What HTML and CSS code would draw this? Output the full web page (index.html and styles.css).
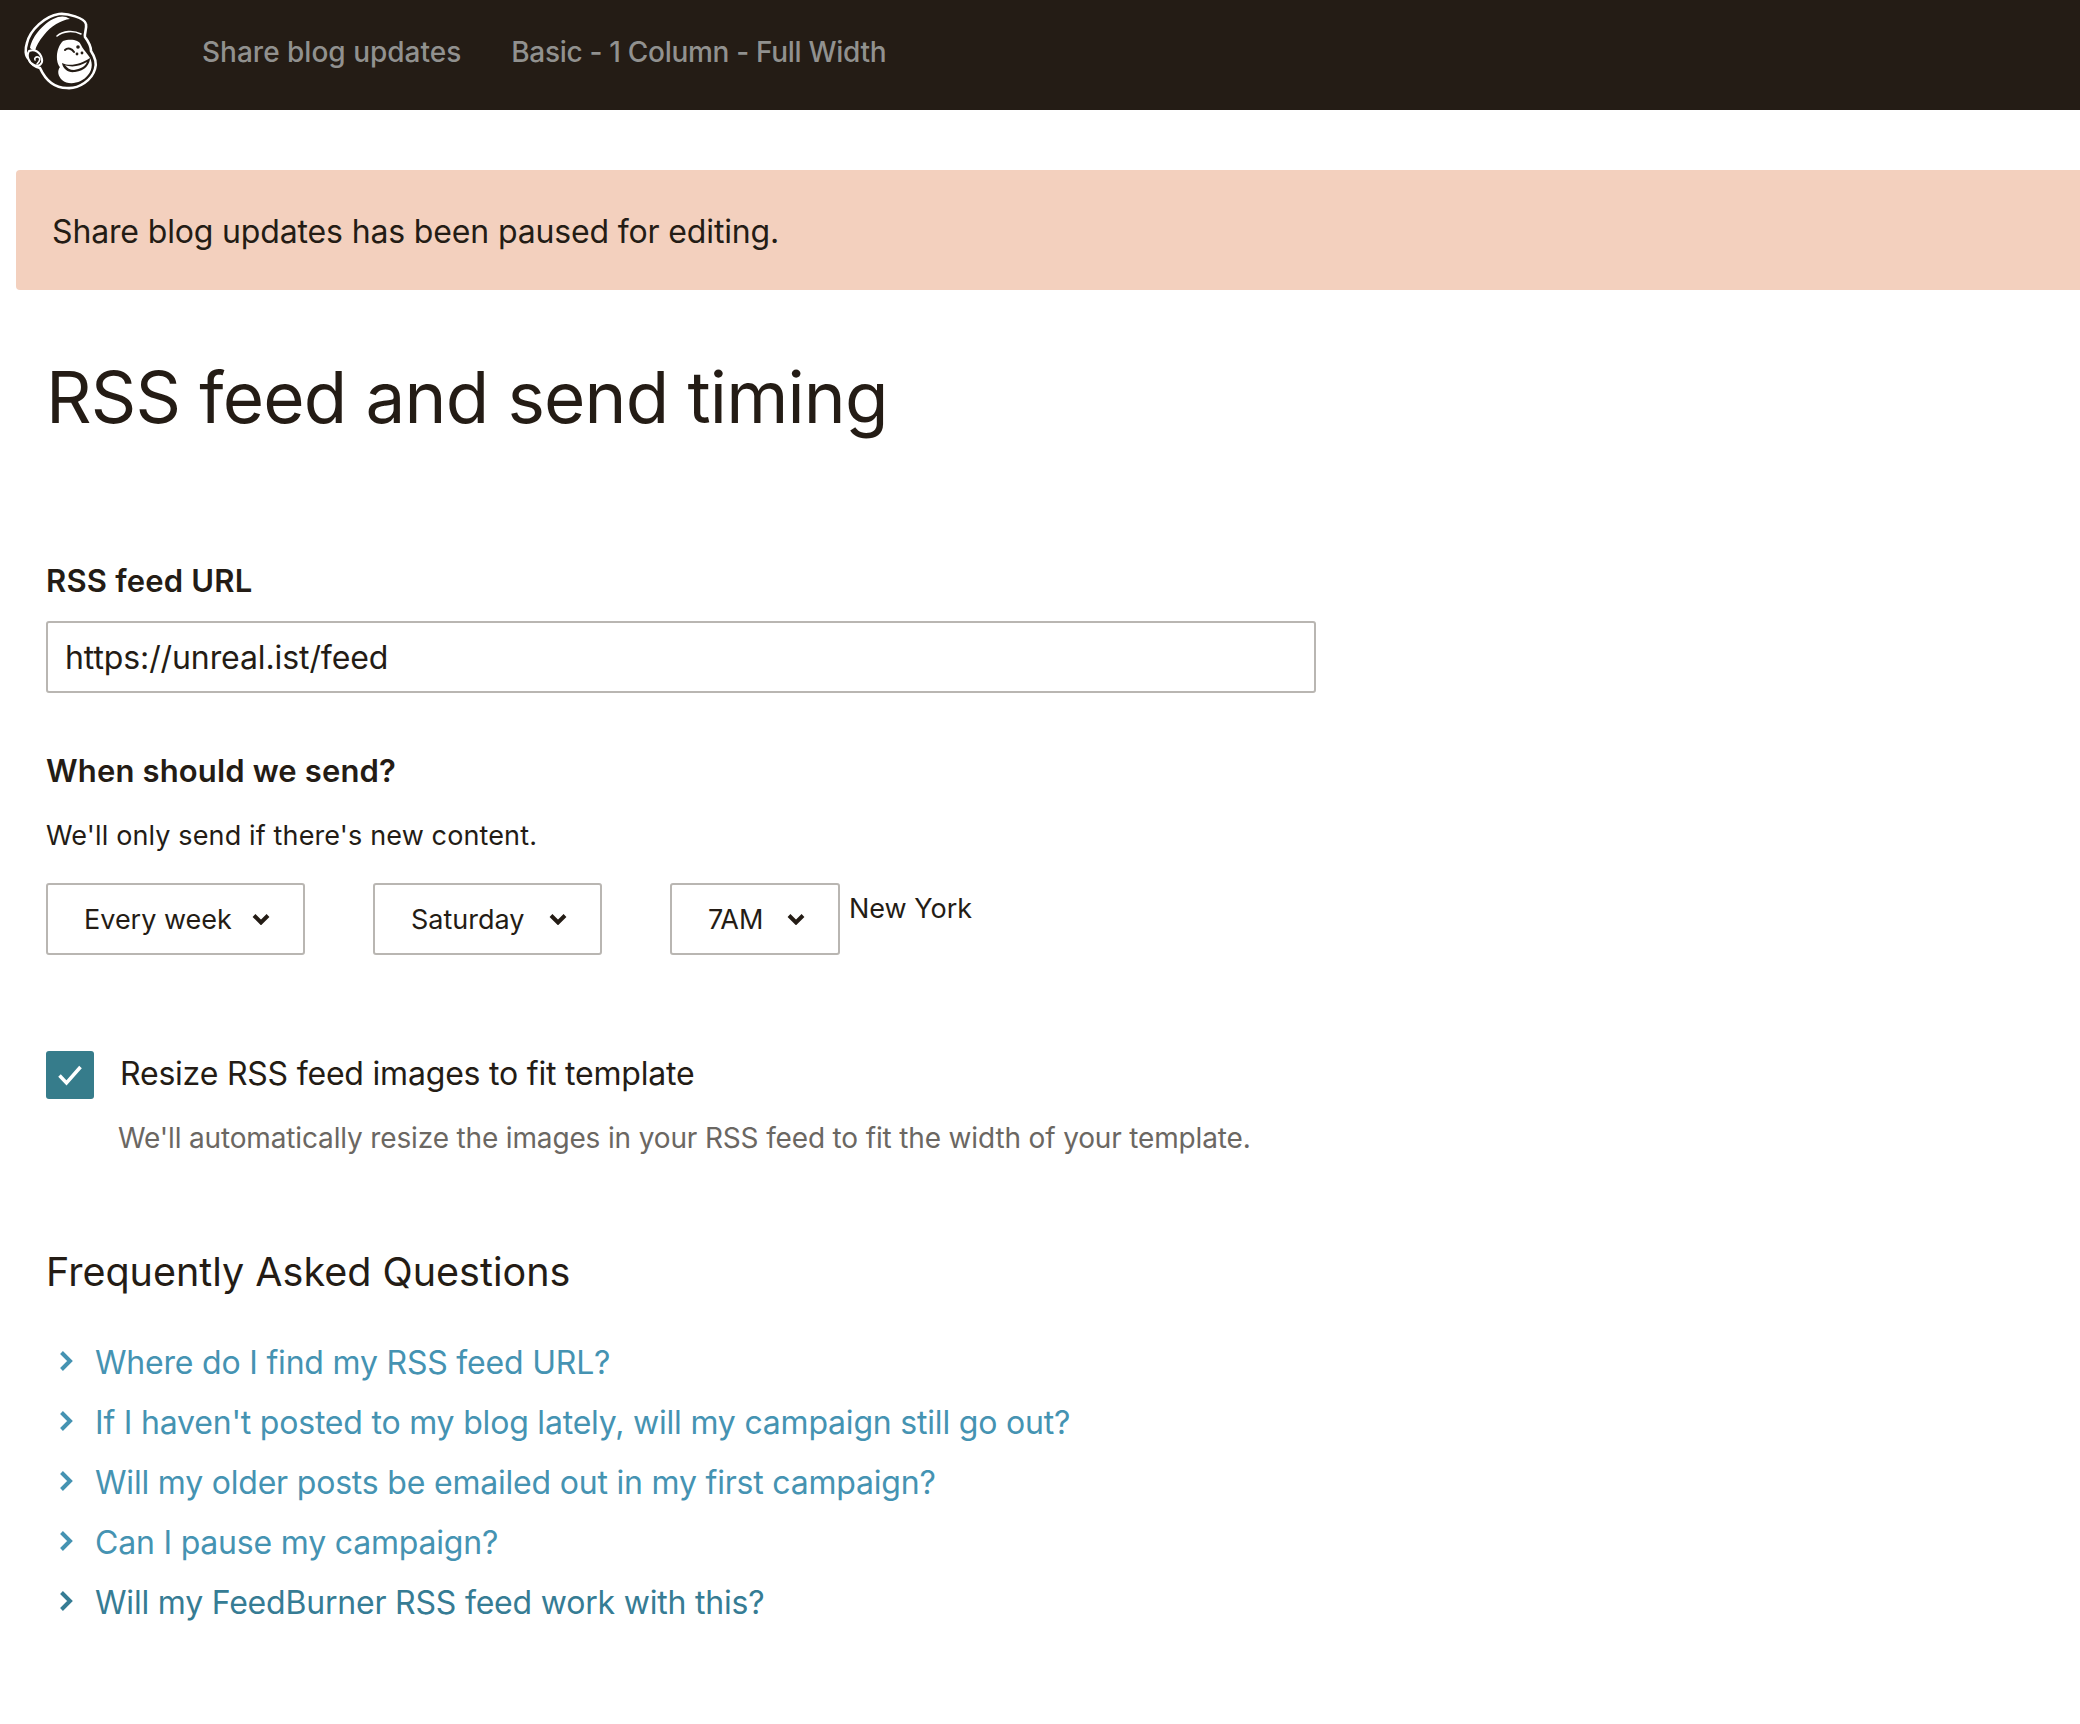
FILE: index.html
```html
<!DOCTYPE html>
<html lang="en">
<head>
<meta charset="utf-8">
<title>RSS feed and send timing</title>
<link rel="stylesheet" href="styles.css">
</head>
<body>
<header class="topbar">
  <svg class="logo" viewBox="0 0 100 100" width="100" height="100" aria-label="Mailchimp">
    <path class="logo-outline" d="M58 13C66 12 84 17 85 23C86 28 83 33 84 36C87 40 90 46 90 50C94 56 96 62 94 68C91 79 78 88 66 87C52 87 44 78 39 67C35 66 30 63 28 58C24 55 24 48 26 42C29 29 44 15 58 13Z"/>
    <path class="logo-band" d="M29 47C31 35 44 20 57 16C61 15 65 15 69 18C60 19 50 25 43 34C38 40 35 45 34 50C32 49 30 48 29 47Z"/>
    <path class="logo-line" d="M56 35C62 30 72 29 80 33"/>
    <path class="logo-face" d="M62 40C68 38 78 38 80 44C82 48 84 50 87 54C92 60 92 68 87 74C81 82 68 85 61 79C57 75 56 70 59 66C55 62 54 48 62 40Z"/>
    <path class="logo-dark" d="M61 62C69 66 80 63 89 57C89 63 84 70 74 71C67 72 62 68 61 62Z"/>
    <path class="logo-white" d="M64 64C71 67 79 65 86 61C84 66 79 68 73 69C69 69 66 67 64 64Z"/>
    <path class="logo-wink" d="M64 49C67 46 71 48 73 51"/>
    <circle class="logo-eye" cx="77" cy="46" r="1.8"/>
    <circle class="logo-eye" cx="76" cy="53" r="1.4"/>
    <circle class="logo-eye" cx="81" cy="52" r="1.4"/>
    <path class="logo-ear" d="M28 50C33 48 39 50 41 58C42 63 38 66 33 64C28 62 25 55 28 50Z"/>
    <path class="logo-earline" d="M36 63C39 60 40 57 37 56C35 55.500 33 57 34 59"/>
  </svg>
  <nav class="crumbs">
    <a class="crumb" href="#">Share blog updates</a>
    <a class="crumb crumb-template" href="#">Basic - 1 Column - Full Width</a>
  </nav>
</header>

<div class="banner">Share blog updates has been paused for editing.</div>

<main class="content">
  <h1 class="title">RSS feed and send timing</h1>

  <label class="field-label" for="feed">RSS feed URL</label>
  <div class="url-input" id="feed">https://unreal.ist/feed</div>

  <h2 class="send-heading">When should we send?</h2>
  <p class="send-note">We'll only send if there's new content.</p>

  <div class="timing">
    <div class="select select-freq">Every week
      <svg class="select-caret" viewBox="0 0 18 12" width="18" height="12"><path d="M2 2.500L9 9.500L16 2.500"/></svg>
    </div>
    <div class="select select-day">Saturday
      <svg class="select-caret" viewBox="0 0 18 12" width="18" height="12"><path d="M2 2.500L9 9.500L16 2.500"/></svg>
    </div>
    <div class="select select-hour">7AM
      <svg class="select-caret" viewBox="0 0 18 12" width="18" height="12"><path d="M2 2.500L9 9.500L16 2.500"/></svg>
    </div>
    <span class="zone">New York</span>
  </div>

  <div class="check-row">
    <span class="checkbox">
      <svg viewBox="0 0 24 24" width="24" height="24"><path d="M1.500 12.500L8.500 20L22.500 4"/></svg>
    </span>
    <span class="check-label">Resize RSS feed images to fit template</span>
  </div>
  <p class="check-help">We'll automatically resize the images in your RSS feed to fit the width of your template.</p>

  <h2 class="faq-heading">Frequently Asked Questions</h2>
  <ul class="faq">
    <li class="faq-item"><svg class="faq-chevron" viewBox="0 0 14 22" width="14" height="22"><path d="M2.500 2.500L11 11L2.500 19.500"/></svg><a href="#">Where do I find my RSS feed URL?</a></li>
    <li class="faq-item"><svg class="faq-chevron" viewBox="0 0 14 22" width="14" height="22"><path d="M2.500 2.500L11 11L2.500 19.500"/></svg><a href="#">If I haven't posted to my blog lately, will my campaign still go out?</a></li>
    <li class="faq-item"><svg class="faq-chevron" viewBox="0 0 14 22" width="14" height="22"><path d="M2.500 2.500L11 11L2.500 19.500"/></svg><a href="#">Will my older posts be emailed out in my first campaign?</a></li>
    <li class="faq-item"><svg class="faq-chevron" viewBox="0 0 14 22" width="14" height="22"><path d="M2.500 2.500L11 11L2.500 19.500"/></svg><a href="#">Can I pause my campaign?</a></li>
    <li class="faq-item faq-item-hover"><svg class="faq-chevron" viewBox="0 0 14 22" width="14" height="22"><path d="M2.500 2.500L11 11L2.500 19.500"/></svg><a href="#">Will my FeedBurner RSS feed work with this?</a></li>
  </ul>
</main>
</body>
</html>
```
FILE: styles.css
```css
* { box-sizing: border-box; }
html, body { margin: 0; padding: 0; }
body {
  background: #fff;
  color: #241c15;
  font-family: Inter, "Noto Sans", "Liberation Sans", sans-serif;
  font-size: 30px;
  height: 1724px;
  overflow: hidden;
}
.topbar {
  display: flex;
  align-items: center;
  height: 110px;
  background: #241c15;
  padding-left: 1px;
}
.logo { flex: none; margin-top: -9px; }
.logo-outline { fill: #241c15; stroke: #fff; stroke-width: 2.600; }
.logo-band { fill: #fff; }
.logo-line { fill: none; stroke: #fff; stroke-width: 1.600; stroke-linecap: round; }
.logo-face { fill: #fff; }
.logo-dark { fill: #241c15; }
.logo-white { fill: #fff; }
.logo-wink { fill: none; stroke: #241c15; stroke-width: 2; stroke-linecap: round; }
.logo-eye { fill: #241c15; }
.logo-ear { fill: #241c15; stroke: #fff; stroke-width: 2; }
.logo-earline { fill: none; stroke: #fff; stroke-width: 1.600; stroke-linecap: round; }
.crumbs {
  display: flex;
  gap: 50px;
  margin-left: 101px;
  margin-top: -7px;
}
.crumb {
  color: #91918f;
  font-size: 28px;
  font-weight: 500;
  text-decoration: none;
}
.crumb-template { letter-spacing: -0.3px; }
.banner {
  height: 120px;
  margin: 60px 0 0 16px;
  padding: 2px 36px 0;
  display: flex;
  align-items: center;
  background: #f3d0be;
  border-radius: 4px 0 0 4px;
  font-size: 32px;
  letter-spacing: -0.15px;
}
.content { padding-left: 46px; }
.title {
  margin: 60px 0 0;
  font-size: 71px;
  line-height: 94px;
  font-weight: 400;
  letter-spacing: -0.85px;
}
.field-label {
  display: block;
  margin-top: 115px;
  font-size: 31px;
  line-height: 44px;
  font-weight: 600;
  letter-spacing: 0.2px;
}
.url-input {
  width: 1270px;
  height: 72px;
  margin-top: 18px;
  padding: 0 17px;
  display: flex;
  align-items: center;
  border: 2px solid #b9b6b2;
  border-radius: 3px;
  font-size: 32px;
  letter-spacing: -0.1px;
}
.send-heading {
  margin: 56px 0 0;
  font-size: 31px;
  line-height: 44px;
  font-weight: 600;
  letter-spacing: 0.15px;
}
.send-note {
  margin: 22px 0 0;
  font-size: 27px;
  line-height: 42px;
  letter-spacing: 0.13px;
}
.timing {
  display: flex;
  align-items: flex-start;
  margin-top: 26px;
}
.select {
  display: flex;
  align-items: center;
  justify-content: space-between;
  height: 72px;
  padding: 0 33px 0 36px;
  border: 2px solid #b9b6b2;
  border-radius: 3px;
  font-size: 27px;
}
.select-freq { width: 259px; }
.select-day { width: 229px; margin-left: 68px; }
.select-hour { width: 170px; margin-left: 68px; }
.select-caret { flex: none; }
.select-caret path { fill: none; stroke: #241c15; stroke-width: 4; }
.zone { margin: 5px 0 0 9px; font-size: 27px; line-height: 42px; }
.check-row {
  display: flex;
  align-items: center;
  margin-top: 96px;
}
.checkbox {
  flex: none;
  width: 48px;
  height: 48px;
  display: flex;
  align-items: center;
  justify-content: center;
  background: #367c8b;
  border-radius: 3px;
}
.checkbox path { fill: none; stroke: #fff; stroke-width: 3.500; }
.check-label { margin: -4px 0 0 26px; font-size: 32px; letter-spacing: -0.2px; }
.check-help {
  margin: 18px 0 0 72px;
  color: #6b6762;
  font-size: 28px;
  line-height: 42px;
  letter-spacing: -0.15px;
}
.faq-heading {
  margin: 85px 0 0;
  font-size: 39.500px;
  line-height: 56px;
  font-weight: 400;
}
.faq { list-style: none; margin: 32px 0 0; padding: 0; }
.faq-item {
  display: flex;
  align-items: center;
  height: 60px;
  color: #4593b2;
  font-size: 32px;
  letter-spacing: -0.2px;
}
.faq-item a { color: inherit; text-decoration: none; }
.faq-chevron { flex: none; margin: -3px 22px 0 13px; }
.faq-chevron path { fill: none; stroke: currentColor; stroke-width: 4; }
.faq-item-hover { color: #367c94; }
```
